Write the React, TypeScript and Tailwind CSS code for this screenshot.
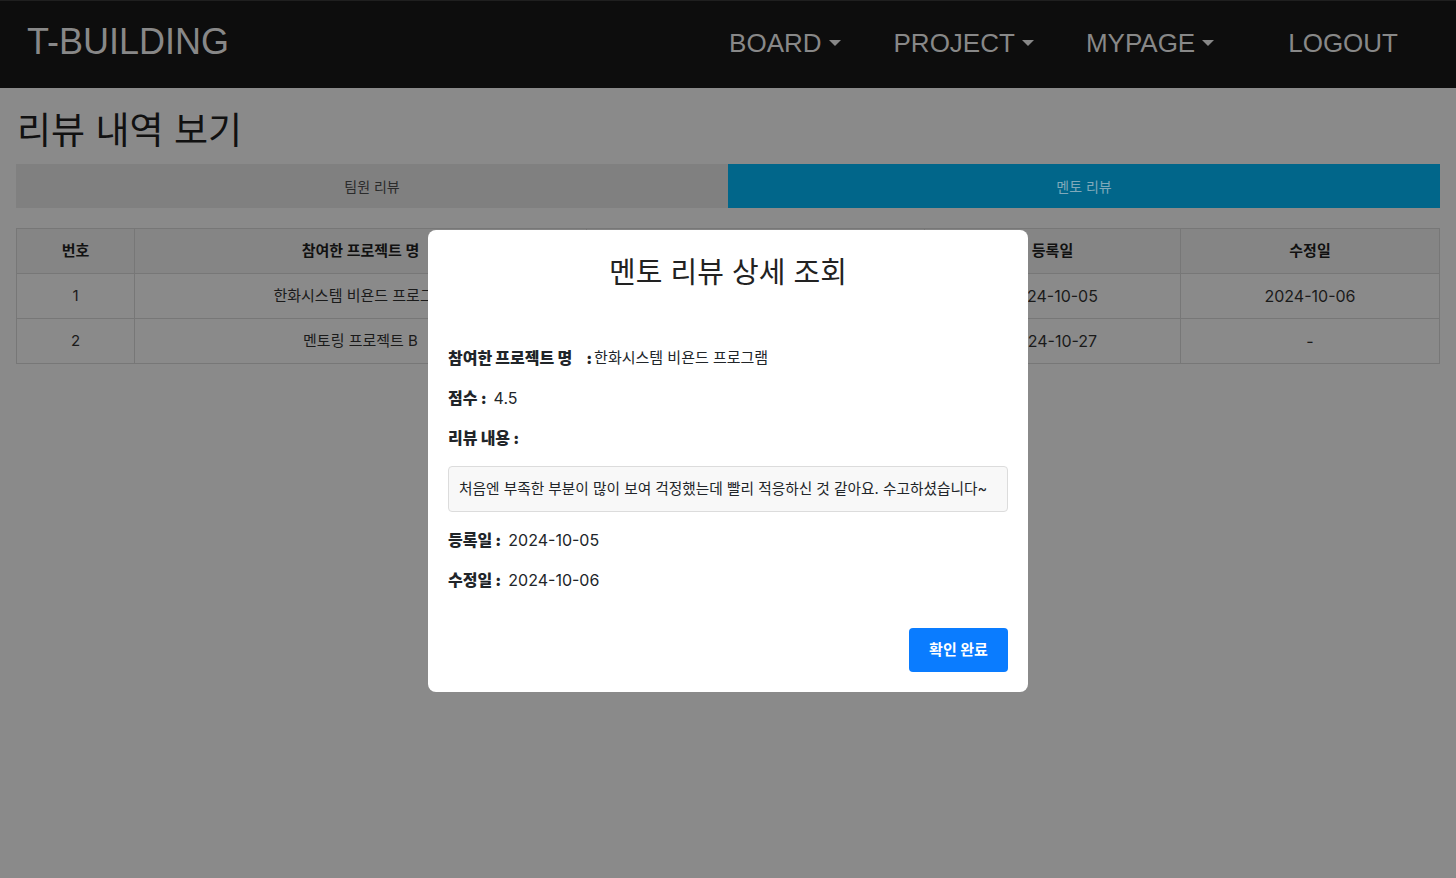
import React from 'react'

const Caret = () => (
  <span className="ml-[7px] inline-block h-0 w-0 border-x-[6px] border-t-[6px] border-x-transparent border-t-[#888]" />
)

const rows = [
  { no: 1, name: '한화시스템 비욘드 프로그램', score: '4.5', created: '2024-10-05', updated: '2024-10-06' },
  { no: 2, name: '멘토링 프로젝트 B', score: '4.0', created: '2024-10-27', updated: '-' },
]

const App = () => {
  return (
    <div className="relative min-h-[878px] bg-[#8a8a8a] font-['Inter','Noto_Sans_CJK_KR',sans-serif]">
      <nav className="flex h-[88px] items-center border-t border-[#1f1f1f] bg-[#0d0d0d] pl-[27px] pr-[58px] font-['Liberation_Sans',Arial,sans-serif] text-[#888]">
        <div className="pb-[6px] text-[36px] leading-none">T-BUILDING</div>
        <div className="ml-auto flex items-center pb-[3px] text-[26px] leading-none">
          <span className="flex items-center">BOARD<Caret /></span>
          <span className="ml-[53px] flex items-center">PROJECT<Caret /></span>
          <span className="ml-[52px] flex items-center">MYPAGE<Caret /></span>
          <span className="ml-[74px]">LOGOUT</span>
        </div>
      </nav>

      <main className="px-4">
        <h1 className="pt-[18px] pb-[8px] pl-px text-[37px] leading-[50px] text-[#111]">리뷰 내역 보기</h1>

        <div className="grid grid-cols-2 text-[14px]">
          <button className="h-[44px] bg-[#808080] text-[#2b2b2b]">팀원 리뷰</button>
          <button className="h-[44px] bg-[#01668a] text-[#7fa9ba]">멘토 리뷰</button>
        </div>

        <table className="mt-5 w-full border-collapse text-center text-[15px] text-[#1a1a1a]">
          <thead>
            <tr className="h-[45px] bg-[#858585] font-bold text-[#111]">
              <th className="w-[118px] border border-[#777]">번호</th>
              <th className="w-[452px] border border-[#777]">참여한 프로젝트 명</th>
              <th className="w-[338px] border border-[#777]">점수</th>
              <th className="w-[256px] border border-[#777]">등록일</th>
              <th className="border border-[#777]">수정일</th>
            </tr>
          </thead>
          <tbody>
            {rows.map(r => (
              <tr key={r.no} className="h-[45px]">
                <td className="border border-[#777]">{r.no}</td>
                <td className="border border-[#777]">{r.name}</td>
                <td className="border border-[#777] text-[16px]">{r.score}</td>
                <td className="border border-[#777] text-[16px]">{r.created}</td>
                <td className="border border-[#777] text-[16px]">{r.updated}</td>
              </tr>
            ))}
          </tbody>
        </table>
      </main>

      {/* modal */}
      <div className="absolute left-[428px] top-[230px] w-[600px] rounded-lg bg-white px-5 pt-5 pb-5 text-[#212529]">
        <h2 className="text-center text-[29px] leading-[45px] text-[#222]">멘토 리뷰 상세 조회</h2>

        <div className="mt-[51px] flex flex-col gap-4">
          <p className="flex items-center leading-6">
            <b className="text-[16px] font-black">참여한 프로젝트 명</b>
            <b className="ml-[14px] mr-[2px] text-[16px] font-black">:</b>
            <span className="text-[15px]">한화시스템 비욘드 프로그램</span>
          </p>
          <p className="flex items-center leading-6">
            <b className="text-[16px] font-black">점수 :</b>
            <span className="ml-[7px] text-[16px]">4.5</span>
          </p>
          <p className="leading-6">
            <b className="text-[16px] font-black">리뷰 내용 :</b>
          </p>
          <div className="rounded border border-[#dcdcdc] bg-[#f8f8f8] px-[10px] py-[10px] text-[14.7px] leading-6">
            처음엔 부족한 부분이 많이 보여 걱정했는데 빨리 적응하신 것 같아요. 수고하셨습니다~
          </div>
          <p className="flex items-center leading-6">
            <b className="text-[16px] font-black">등록일 :</b>
            <span className="ml-[7px] text-[16px]">2024-10-05</span>
          </p>
          <p className="flex items-center leading-6">
            <b className="text-[16px] font-black">수정일 :</b>
            <span className="ml-[7px] text-[16px]">2024-10-06</span>
          </p>
        </div>

        <div className="mt-9 flex justify-end">
          <button className="h-[44px] w-[99px] rounded bg-[#0a7cff] text-[15px] font-bold text-white">확인 완료</button>
        </div>
      </div>
    </div>
  )
}

export default App
